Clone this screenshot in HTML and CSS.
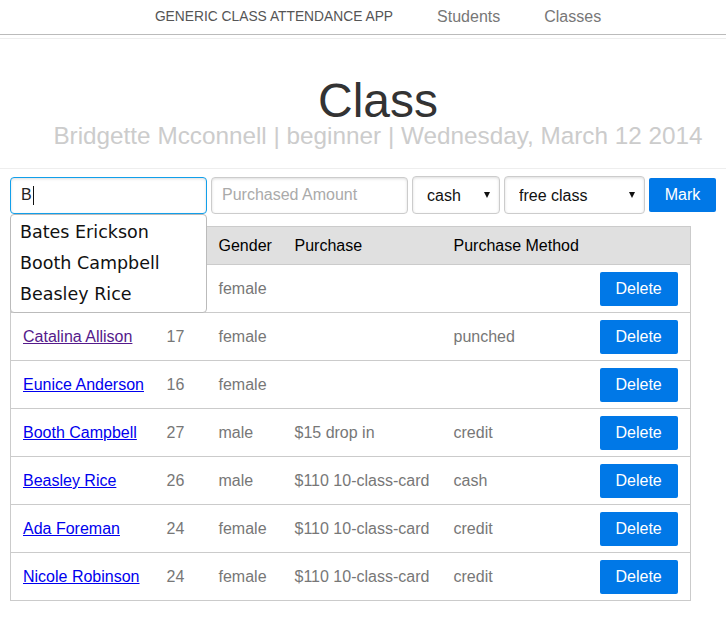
FILE: index.html
```html
<!DOCTYPE html>
<html lang="en">
<head>
<meta charset="utf-8">
<title>Class</title>
<link rel="stylesheet" href="styles.css">
</head>
<body>
<nav class="topbar">
  <span class="brand">Generic Class Attendance App</span>
  <a class="nav-link" href="#">Students</a>
  <a class="nav-link" href="#">Classes</a>
</nav>
<div class="topbar-rule"></div>
<header class="class-head">
  <h1 class="class-title">Class</h1>
  <p class="class-sub">Bridgette Mcconnell | beginner | Wednesday, March 12 2014</p>
</header>
<hr class="divider">
<main class="content">
  <form class="mark-form">
    <div class="autocomplete">
      <input class="field field-name" type="text" value="B">
      <ul class="suggestions">
        <li class="suggestion">Bates Erickson</li>
        <li class="suggestion">Booth Campbell</li>
        <li class="suggestion">Beasley Rice</li>
      </ul>
    </div>
    <input class="field field-amount" type="text" placeholder="Purchased Amount">
    <div class="select-wrap select-method">
      <select class="field select">
        <option>cash</option>
        <option>credit</option>
        <option>punched</option>
      </select>
    </div>
    <div class="select-wrap select-purchase">
      <select class="field select">
        <option>free class</option>
        <option>$15 drop in</option>
        <option>$110 10-class-card</option>
      </select>
    </div>
    <button class="btn" type="button">Mark</button>
  </form>

  <table class="roster">
    <colgroup>
      <col class="c-name"><col class="c-age"><col class="c-gender"><col class="c-purchase"><col class="c-method"><col class="c-action">
    </colgroup>
    <thead>
      <tr><th>Name</th><th>Age</th><th>Gender</th><th>Purchase</th><th>Purchase Method</th><th></th></tr>
    </thead>
    <tbody>
      <tr><td><a class="student" href="#">Bates Erickson</a></td><td>22</td><td>female</td><td></td><td></td><td><button class="btn" type="button">Delete</button></td></tr>
      <tr><td><a class="student visited" href="#">Catalina Allison</a></td><td>17</td><td>female</td><td></td><td>punched</td><td><button class="btn" type="button">Delete</button></td></tr>
      <tr><td><a class="student" href="#">Eunice Anderson</a></td><td>16</td><td>female</td><td></td><td></td><td><button class="btn" type="button">Delete</button></td></tr>
      <tr><td><a class="student" href="#">Booth Campbell</a></td><td>27</td><td>male</td><td>$15 drop in</td><td>credit</td><td><button class="btn" type="button">Delete</button></td></tr>
      <tr><td><a class="student" href="#">Beasley Rice</a></td><td>26</td><td>male</td><td>$110 10-class-card</td><td>cash</td><td><button class="btn" type="button">Delete</button></td></tr>
      <tr><td><a class="student" href="#">Ada Foreman</a></td><td>24</td><td>female</td><td>$110 10-class-card</td><td>credit</td><td><button class="btn" type="button">Delete</button></td></tr>
      <tr><td><a class="student" href="#">Nicole Robinson</a></td><td>24</td><td>female</td><td>$110 10-class-card</td><td>credit</td><td><button class="btn" type="button">Delete</button></td></tr>
    </tbody>
  </table>
</main>
</body>
</html>
```

FILE: styles.css
```css
body {
  margin: 0;
  background: #fff;
  color: #333;
  font-family: "Liberation Sans", Arial, sans-serif;
}

/* top navigation */
.topbar {
  display: flex;
  justify-content: center;
  align-items: center;
  gap: 44px;
  height: 35px;
  box-sizing: border-box;
  padding: 0 0 1px 30px;
  border-bottom: 1px solid #bbb;
}
.brand {
  font-size: 13.8px;
  text-transform: uppercase;
  color: #555;
}
.nav-link {
  font-size: 16px;
  color: #777;
  text-decoration: none;
}
.topbar-rule {
  margin-top: 3px;
  border-top: 1px solid #eee;
}

/* class heading */
.class-head {
  margin-top: 39px;
  padding-left: 30px;
  text-align: center;
}
.class-title {
  margin: 0;
  font-size: 48px;
  font-weight: normal;
  line-height: 46px;
  color: #333;
}
.class-sub {
  margin: 0;
  font-size: 24.3px;
  line-height: 24px;
  color: #ccc;
}
.divider {
  margin: 20px 0 0;
  height: 0;
  border: 0;
  border-top: 1px solid #eee;
}

.content {
  padding: 7px 10px 0;
}

/* form */
.mark-form {
  display: flex;
  align-items: center;
  gap: 4px;
}
.field {
  box-sizing: border-box;
  height: 37px;
  margin: 0;
  padding: 0 10px;
  border: 1px solid #ccc;
  border-radius: 4px;
  box-shadow: inset 0 1px 3px #ddd;
  background: #fff;
  font-family: "Liberation Sans", Arial, sans-serif;
  font-size: 16px;
  color: #333;
  outline: none;
}
.field::placeholder {
  color: #aaa;
}
.field-name {
  width: 197px;
  border-color: #129fea;
  color: #222;
  /* text caret after the typed letter */
  background: #fff linear-gradient(#111, #111) no-repeat 22px 50% / 1px 19px;
}
.field-amount {
  width: 197px;
}
.autocomplete {
  position: relative;
}
.suggestions {
  position: absolute;
  left: 0;
  top: 37px;
  z-index: 5;
  width: 197px;
  box-sizing: border-box;
  margin: 0;
  padding: 2px 0;
  list-style: none;
  background: #fff;
  border: 1px solid #bbb;
  border-radius: 4px;
}
.suggestion {
  height: 31px;
  line-height: 31px;
  padding-left: 9px;
  font-family: "DejaVu Sans", Verdana, sans-serif;
  font-size: 17.5px;
  color: #111;
}

.select-wrap {
  position: relative;
}
.select-wrap::after {
  content: "";
  position: absolute;
  right: 10px;
  top: 16px;
  border-left: 3.5px solid transparent;
  border-right: 3.5px solid transparent;
  border-top: 6px solid #111;
  pointer-events: none;
}
.select {
  appearance: none;
  -webkit-appearance: none;
  height: 38px;
  padding: 0 14px;
  color: #111;
}
.select-method .select {
  width: 88px;
}
.select-purchase .select {
  width: 141px;
}

.btn {
  margin: 0;
  padding: 8px 16px;
  border: 0;
  border-radius: 2px;
  background: #0078e7;
  color: #fff;
  font-family: "Liberation Sans", Arial, sans-serif;
  font-size: 16px;
  line-height: 18px;
}
.mark-form .btn {
  width: 67px;
  padding: 8px 0;
}

/* roster table */
.roster {
  margin-top: 12px;
  width: 680px;
  table-layout: fixed;
  border-collapse: collapse;
  border: 1px solid #cbcbcb;
  font-size: 16px;
}
.c-name { width: 144px; }
.c-age { width: 52px; }
.c-gender { width: 76px; }
.c-purchase { width: 159px; }
.c-method { width: 146px; }
.c-action { width: 103px; }
.roster th {
  padding: 10px 12px 9px;
  line-height: 18px;
  background: #e0e0e0;
  color: #000;
  font-weight: normal;
  text-align: left;
  border-bottom: 1px solid #cbcbcb;
  white-space: nowrap;
}
.roster td {
  padding: 7px 12px 6px;
  line-height: 18px;
  color: #777;
  border-bottom: 1px solid #cbcbcb;
  vertical-align: middle;
  white-space: nowrap;
}
.student {
  color: #0000ee;
}
.student.visited {
  color: #551a8b;
}
```
